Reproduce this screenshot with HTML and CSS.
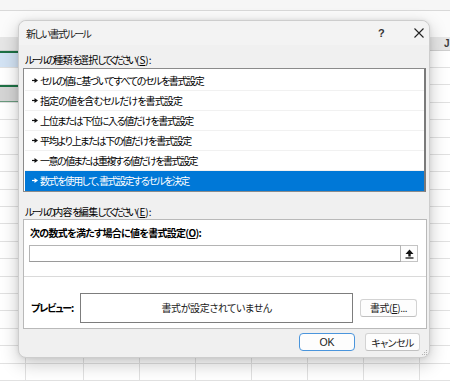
FILE: index.html
```html
<!DOCTYPE html>
<html lang="ja">
<head>
<meta charset="utf-8">
<title>新しい書式ルール</title>
<link rel="stylesheet" href="styles.css">
</head>
<body>
<div class="sheet">
  <div class="topbar"></div>
  <div class="spacer"></div>
  <div class="colhead"><span class="colname">J</span></div>
  <div class="grid">
    <div class="row r-sel"><div class="cell-a"></div></div>
    <div class="row"></div>
    <div class="row r-gray"><div class="cell-a"></div></div>
    <div class="row"></div>
    <div class="row"></div>
    <div class="row"></div>
    <div class="row"></div>
    <div class="row"></div>
    <div class="row"></div>
    <div class="row"></div>
    <div class="row"></div>
    <div class="row"></div>
    <div class="row"></div>
    <div class="row"></div>
    <div class="row"></div>
    <div class="row"></div>
    <div class="row"></div>
    <div class="row"></div>
    <div class="row"></div>
  </div>
</div>

<div class="dialog">
  <div class="titlebar">
    <span class="title">新しい書式ルール</span>
    <span class="help">?</span>
    <span class="close"><svg width="10" height="10" viewBox="0 0 10 10"><path d="M0.5 0.5 L9.5 9.5 M9.5 0.5 L0.5 9.5" stroke="#222" stroke-width="1.1" fill="none"/></svg></span>
  </div>
  <div class="body">
    <div class="label first"><span class="kn">ルールの</span>種類<span class="kn">を</span>選択<span class="kn">してください</span><span class="acc">(<u>S</u>):</span></div>
    <div class="list">
      <div class="item w1"><svg class="arrow" width="6" height="5" viewBox="0 0 6 5"><path d="M0 2.5 H3" stroke="currentColor" stroke-width="1.2"/><path d="M2.5 0 L6 2.5 L2.5 5 Z" fill="currentColor"/></svg>セルの値に基づいてすべてのセルを書式設定</div>
      <div class="item w2"><svg class="arrow" width="6" height="5" viewBox="0 0 6 5"><path d="M0 2.5 H3" stroke="currentColor" stroke-width="1.2"/><path d="M2.5 0 L6 2.5 L2.5 5 Z" fill="currentColor"/></svg>指定の値を含むセルだけを書式設定</div>
      <div class="item w3"><svg class="arrow" width="6" height="5" viewBox="0 0 6 5"><path d="M0 2.5 H3" stroke="currentColor" stroke-width="1.2"/><path d="M2.5 0 L6 2.5 L2.5 5 Z" fill="currentColor"/></svg>上位または下位に入る値だけを書式設定</div>
      <div class="item w4"><svg class="arrow" width="6" height="5" viewBox="0 0 6 5"><path d="M0 2.5 H3" stroke="currentColor" stroke-width="1.2"/><path d="M2.5 0 L6 2.5 L2.5 5 Z" fill="currentColor"/></svg>平均より上または下の値だけを書式設定</div>
      <div class="item w5"><svg class="arrow" width="6" height="5" viewBox="0 0 6 5"><path d="M0 2.5 H3" stroke="currentColor" stroke-width="1.2"/><path d="M2.5 0 L6 2.5 L2.5 5 Z" fill="currentColor"/></svg>一意の値または重複する値だけを書式設定</div>
      <div class="item sel w6"><svg class="arrow" width="6" height="5" viewBox="0 0 6 5"><path d="M0 2.5 H3" stroke="currentColor" stroke-width="1.2"/><path d="M2.5 0 L6 2.5 L2.5 5 Z" fill="currentColor"/></svg>数式を使用して、書式設定するセルを決定</div>
    </div>
    <div class="label second"><span class="kn">ルールの</span>内容<span class="kn">を</span>編集<span class="kn">してください</span><span class="acc">(<u>E</u>):</span></div>
    <div class="group">
      <div class="gtop">
        <div class="blabel">次の数式を満たす場合に値を書式設定(<u>O</u>):</div>
        <div class="inputrow">
          <div class="input"></div>
          <div class="pick"><svg width="9" height="10" viewBox="0 0 9 10"><path d="M4.5 0.5 L8.5 5 H5.7 V7.5 H3.3 V5 H0.5 Z" fill="#111"/><path d="M0.5 9 H8.5" stroke="#111" stroke-width="1.3"/></svg></div>
        </div>
      </div>
      <div class="gbottom">
        <span class="blabel plabel">プレビュー:</span>
        <div class="preview">書式が設定されていません</div>
        <div class="btn fmt">書式(<u>E</u>)...</div>
      </div>
    </div>
    <div class="actions">
      <div class="btn ok">OK</div>
      <div class="btn cancel">キャンセル</div>
    </div>
  </div>
  <svg class="grip" width="7" height="7" viewBox="0 0 7 7"><g fill="#b4b4b4"><rect x="5" y="1" width="1" height="1"/><rect x="3" y="3" width="1" height="1"/><rect x="5" y="3" width="1" height="1"/><rect x="1" y="5" width="1" height="1"/><rect x="3" y="5" width="1" height="1"/><rect x="5" y="5" width="1" height="1"/></g></svg>
</div>
</body>
</html>
```
FILE: styles.css
```css
html, body {
  margin: 0;
  padding: 0;
}
body {
  width: 450px;
  height: 381px;
  overflow: hidden;
  position: relative;
  background: #ffffff;
  font-family: "Noto Sans CJK JP", "Noto Sans", sans-serif;
  font-feature-settings: "palt" 1;
  color: #000;
}

/* ---------- spreadsheet background ---------- */
.sheet {
  display: flex;
  flex-direction: column;
  width: 450px;
  height: 381px;
}
.topbar {
  height: 10px;
  background: #f6f6f6;
  border-bottom: 1px solid #d9d9d9;
}
.spacer {
  height: 26px;
  background: #fbfbfb;
}
.colhead {
  height: 14px;
  box-sizing: border-box;
  background-color: #e6e6e6;
  border-bottom: 1px solid #cfcfcf;
  background-image: repeating-linear-gradient(to right, transparent 0 55px, #cfcfcf 55px 56px);
  background-position: 28px 0;
  font-family: "Liberation Sans", sans-serif;
  font-size: 10px;
  line-height: 13px;
  color: #3b3b3b;
}
.colname {
  display: block;
  padding-left: 444px;
  font-weight: bold;
}
.grid {
  flex: 1;
  background-image: repeating-linear-gradient(to right, transparent 0 55px, #e1e1e1 55px 56px);
  background-position: 28px 0;
}
.row {
  height: 17.4px;
  box-sizing: border-box;
  border-bottom: 1px solid #e1e1e1;
}
.cell-a {
  width: 83px;
  height: 100%;
}
.r-sel .cell-a {
  background: #d3e3f4;
  border-top: 2px solid #1e7145;
  box-sizing: border-box;
}
.r-gray .cell-a {
  background: #d5d5d5;
  border-top: 2px solid #1e7145;
  border-bottom: 1px solid #6a9a7e;
  box-sizing: border-box;
}

/* ---------- dialog ---------- */
.dialog {
  position: absolute;
  left: 18px;
  top: 20px;
  width: 412px;
  height: 338px;
  box-sizing: border-box;
  background: #f0f0f0;
  border: 1px solid #cdcdcd;
  border-radius: 8px;
  box-shadow: 0 6px 18px rgba(0, 0, 0, 0.22), 0 0 4px rgba(0, 0, 0, 0.08);
  font-size: 10px;
  display: flex;
  flex-direction: column;
}
.titlebar {
  height: 24px;
  display: flex;
  align-items: center;
  padding-left: 7px;
  background: #f3f3f3;
  border-radius: 8px 8px 0 0;
}
.title {
  flex: 1;
  color: #1a1a1a;
  letter-spacing: -1.5px;
}
.help {
  width: 12px;
  font-family: "Liberation Sans", sans-serif;
  font-size: 11px;
  font-weight: bold;
  color: #333;
  margin-right: 24px;
}
.close {
  display: flex;
  margin-right: 5px;
}
.body {
  display: flex;
  flex-direction: column;
  padding: 0 9px 0 4px;
}
.label {
  line-height: 14px;
  padding-left: 2px;
  white-space: nowrap;
  letter-spacing: -0.6px;
}
.label .kn {
  letter-spacing: -2.5px;
}
.label .acc {
  letter-spacing: 0;
  margin-left: 1px;
}
.label.first {
  margin-top: 8px;
  margin-bottom: 1px;
}
.label.second {
  margin-top: 13px;
}
u {
  text-decoration: underline;
  text-underline-offset: 1px;
}

.list {
  width: 403px;
  height: 124px;
  box-sizing: border-box;
  background: #fff;
  border: 1px solid #8b8b8b;
  border-right: 2px solid #7a7a7a;
  padding: 2px 0 0 1px;
}
.item {
  height: 20px;
  box-sizing: border-box;
  border-bottom: 1px solid #f1f1f1;
  display: flex;
  align-items: center;
  white-space: nowrap;
  padding-left: 7px;
  letter-spacing: -1.4px;
}
.item.w2 { letter-spacing: -0.9px; }
.item.w3 { letter-spacing: -1.3px; }
.item.w4 { letter-spacing: -1.3px; }
.item.w5 { letter-spacing: -1.5px; }
.item.w6 { letter-spacing: -1.5px; }
.item .arrow {
  margin-right: 2px;
  color: #111;
}
.item.sel {
  background: #0078d7;
  color: #fff;
  border-bottom-color: #0078d7;
}
.item.sel .arrow {
  color: #fff;
}

.group {
  width: 404px;
  height: 110px;
  box-sizing: border-box;
  background: #fff;
  border: 1px solid #b9b9b9;
  display: flex;
  flex-direction: column;
}
.gtop {
  padding: 6px 8px 14px 5px;
  border-bottom: 1px solid #dadada;
}
.blabel {
  font-weight: bold;
  line-height: 14px;
  white-space: nowrap;
  padding-left: 1px;
  letter-spacing: -0.7px;
}
.inputrow {
  display: flex;
  margin-top: 5px;
  height: 17px;
}
.input {
  flex: 1;
  box-sizing: border-box;
  border: 1px solid #b4b4b4;
  border-bottom-color: #9a9a9a;
  background: #fff;
}
.pick {
  width: 17px;
  box-sizing: border-box;
  border: 1px solid #c4c4c4;
  border-left: none;
  display: flex;
  align-items: center;
  justify-content: center;
  background: #fdfdfd;
}
.gbottom {
  flex: 1;
  display: flex;
  align-items: center;
  padding: 14px 9px 4px 6px;
}
.plabel {
  width: 49px;
  flex: none;
  letter-spacing: -1.2px;
}
.preview {
  width: 274px;
  height: 30px;
  box-sizing: border-box;
  border: 1px solid #7d7d7d;
  display: flex;
  align-items: center;
  justify-content: center;
  color: #1a1a1a;
  letter-spacing: -0.4px;
}
.btn {
  box-sizing: border-box;
  height: 18px;
  display: flex;
  align-items: center;
  justify-content: center;
  background: #fdfdfd;
  border: 1px solid #d3d3d3;
  border-bottom-color: #c0c0c0;
  border-radius: 3px;
  white-space: nowrap;
  color: #1a1a1a;
}
.fmt {
  width: 57px;
  margin-left: 7px;
  letter-spacing: -0.5px;
}
.actions {
  display: flex;
  justify-content: flex-end;
  gap: 10px;
  margin-top: 4px;
}
.ok {
  width: 56px;
  border: 1px solid #4a95dc;
  border-radius: 4px;
  font-family: "Liberation Sans", sans-serif;
  font-size: 10.5px;
}
.cancel {
  width: 55px;
  letter-spacing: -0.6px;
}
.grip {
  position: absolute;
  right: 1px;
  bottom: 1px;
}
```
